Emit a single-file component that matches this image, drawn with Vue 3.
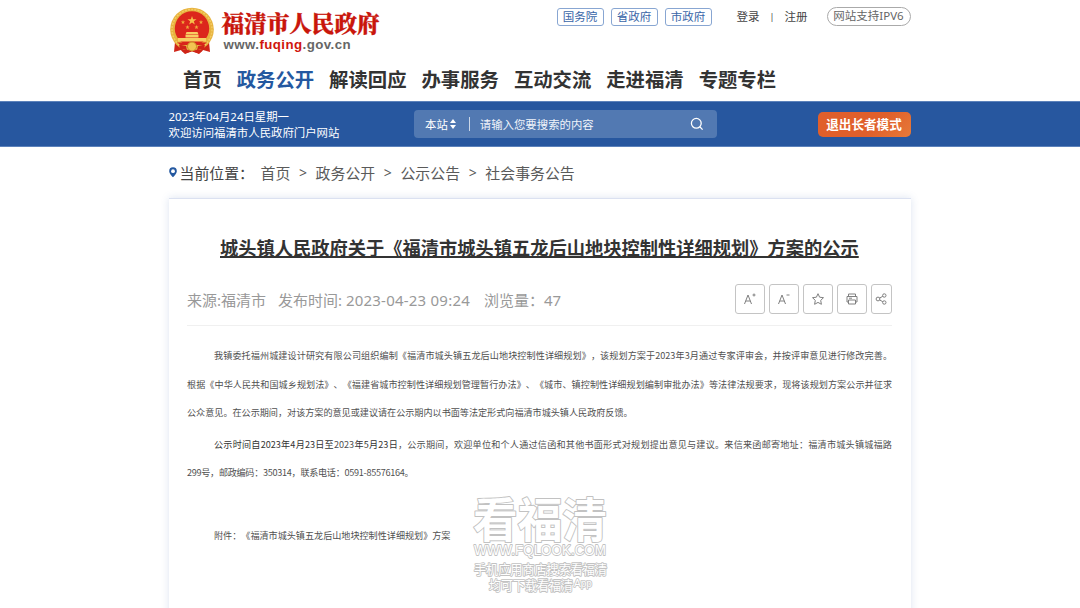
<script setup>
import { ref } from 'vue'

const keyword = ref('')
const activeNav = ref('政务公开')
const portals = ['国务院', '省政府', '市政府']
const navItems = ['首页', '政务公开', '解读回应', '办事服务', '互动交流', '走进福清', '专题专栏']
const crumbs = ['首页', '政务公开', '公示公告', '社会事务公告']
</script>

<template>
  <div class="page">
    <header class="header">
      <div class="container top">
        <div class="logo">
          <svg class="emblem" viewBox="0 0 46 48">
            <path d="M6 35L5 45L12 43L16 47L23 44L30 47L34 43L41 45L40 35Z" fill="#cf2518" />
            <circle cx="23" cy="22.5" r="21.8" fill="#e7b33e" />
            <circle cx="23" cy="22.5" r="20" fill="none" stroke="#f3ca62" stroke-width="1.6" stroke-dasharray="2 1.2" />
            <circle cx="23" cy="21.5" r="17.2" fill="#dc261c" />
            <path d="M23 9l1.100 3.200h3.400l-2.700 2 1 3.300-2.800-2-2.800 2 1-3.300-2.700-2h3.400z" fill="#f7c04b" />
            <path d="M14 13l.6 1.400 1.500.1-1.200 1 .4 1.500-1.300-.8-1.300.8.4-1.500-1.200-1 1.500-.1zM32 13l.6 1.400 1.500.1-1.200 1 .4 1.500-1.300-.8-1.300.8.4-1.500-1.200-1 1.500-.1zM18.500 18l.6 1.400 1.500.1-1.200 1 .4 1.500-1.300-.8-1.300.8.4-1.500-1.200-1 1.500-.1zM27.500 18l.6 1.400 1.500.1-1.200 1 .4 1.500-1.300-.8-1.300.8.4-1.500-1.200-1 1.500-.1z" fill="#f0a83c" />
            <path d="M17.500 25h11l1 2.500h-13zM16.500 28h13v2.500h-13zM9 31h28v3.500H9z" fill="#f7cf62" />
            <path d="M8 35.500h30l-3.500 2.500H11.500z" fill="#d8251b" />
            <path d="M10 37.500l7 1.500 1 4-7-1zM36 37.500l-7 1.500-1 4 7-1z" fill="#cf2518" />
            <circle cx="23" cy="39.500" r="4.500" fill="#f2c552" stroke="#c98d22" />
            <path d="M12 43.500l6-1 5 2 5-2 6 1-4 3-7-2-7 2z" fill="#cf2518" />
          </svg>
          <div class="logo-text">
            <div class="site-name">福清市人民政府</div>
            <div class="site-url">www.<span>fuqing</span>.gov.cn</div>
          </div>
        </div>
        <div class="links">
          <a v-for="item of portals" :key="item" class="portal">{{ item }}</a>
          <a class="login">登录</a>
          <span class="bar">|</span>
          <a class="register">注册</a>
          <a class="ipv6">网站支持IPV6</a>
        </div>
      </div>
      <nav class="container nav">
        <a
          v-for="item of navItems"
          :key="item"
          :class="item === activeNav ? 'active' : ''"
          @click="activeNav = item"
          >{{ item }}</a
        >
      </nav>
    </header>

    <div class="blue-bar">
      <div class="container blue-inner">
        <div class="welcome">
          <div>2023年04月24日星期一</div>
          <div>欢迎访问福清市人民政府门户网站</div>
        </div>
        <div class="search">
          <span>本站</span>
          <svg class="sort" viewBox="0 0 6 10">
            <path d="M3 0L6 4H0zM0 6h6L3 10z" fill="#fff" />
          </svg>
          <i class="divider"></i>
          <input v-model="keyword" placeholder="请输入您要搜索的内容" />
          <svg class="magnifier" viewBox="0 0 14 14">
            <circle cx="6.300" cy="6.300" r="4.900" />
            <path d="M9.800 9.800L12.600 12.600" />
          </svg>
        </div>
        <button class="elder">退出长者模式</button>
      </div>
    </div>

    <div class="container crumbs">
      <svg class="pin" viewBox="0 0 8 11">
        <path d="M4 .3a3.800 3.800 0 0 1 3.800 3.900C7.800 6.800 4 10.200 4 10.200S.2 6.800.2 4.200A3.800 3.800 0 0 1 4 .3z" fill="#2458a0" />
        <circle cx="4" cy="4.200" r="1.900" fill="#fff" />
      </svg>
      <span class="crumb-label">当前位置：</span>
      <template v-for="(item, index) of crumbs" :key="item">
        <span v-if="index > 0" class="arrow">&gt;</span>
        <a>{{ item }}</a>
      </template>
    </div>

    <main class="container card">
      <h1>城头镇人民政府关于《福清市城头镇五龙后山地块控制性详细规划》方案的公示</h1>
      <div class="meta">
        <span class="source">来源:福清市</span>
        <span class="time">发布时间: <span class="date">2023-04-23 09:24</span></span>
        <span>浏览量：47</span>
        <div class="tools">
          <button>
            <svg viewBox="0 0 14 14"><path d="M1.500 12L5 3L8.500 12M2.700 9h4.600M9.500 3h3M11 1.500v3" /></svg>
          </button>
          <button>
            <svg viewBox="0 0 14 14"><path d="M1.500 12L5 3L8.500 12M2.700 9h4.600M9.500 3h3" /></svg>
          </button>
          <button>
            <svg viewBox="0 0 14 14">
              <path d="M7 1.700l1.600 3.500 3.900.5-2.800 2.700.7 3.900L7 10.400l-3.400 1.900.7-3.900L1.500 5.700l3.900-.5z" />
            </svg>
          </button>
          <button>
            <svg viewBox="0 0 14 14">
              <path d="M3.500 4.500V2h7v2.500M3.500 10H2V4.500h10V10h-1.500M3.500 8h7v4h-7zM4 6.200h3" />
            </svg>
          </button>
          <button class="share">
            <svg viewBox="0 0 14 14">
              <circle cx="4" cy="7" r="1.900" />
              <circle cx="10.300" cy="3.500" r="1.700" />
              <circle cx="10.300" cy="10.500" r="1.700" />
              <path d="M5.700 6l3.100-1.700M5.700 8l3.100 1.700" />
            </svg>
          </button>
        </div>
      </div>

      <article class="content">
        <p>
          <span class="line first">我镇委托福州城建设计研究有限公司组织编制《福清市城头镇五龙后山地块控制性详细规划》，该规划方案于2023年3月通过专家评审会，并按评审意见进行修改完善。</span>
          <span class="line">根据《中华人民共和国城乡规划法》、《福建省城市控制性详细规划管理暂行办法》、《城市、镇控制性详细规划编制审批办法》等法律法规要求，现将该规划方案公示并征求</span>
          <span class="line last">公众意见。在公示期间，对该方案的意见或建议请在公示期内以书面等法定形式向福清市城头镇人民政府反馈。</span>
        </p>
        <p>
          <span class="line first"><b>公示时间自2023年4月23日至</b>2023<b>年5月23日</b>，公示期间，欢迎单位和个人通过信函和其他书面形式对规划提出意见与建议。来信来函邮寄地址：福清市城头镇城福路</span>
          <span class="line last numbers">299号，邮政编码：350314，联系电话：0591-85576164。</span>
        </p>
        <p class="attachment">附件：《福清市城头镇五龙后山地块控制性详细规划》方案</p>
      </article>
    </main>

    <svg class="watermark" viewBox="0 0 140 104">
      <text class="wm-big" x="3" y="43" textLength="134" lengthAdjust="spacingAndGlyphs">看福清</text>
      <text class="wm-url" x="4" y="60.500" textLength="132" lengthAdjust="spacingAndGlyphs">WWW.FQLOOK.COM</text>
      <text class="wm-small" x="4" y="80" textLength="133" lengthAdjust="spacingAndGlyphs">手机应用商店搜索看福清</text>
      <text class="wm-small" x="19" y="96" textLength="84" lengthAdjust="spacingAndGlyphs">均可下载看福清</text>
      <text class="wm-app" x="104" y="93" textLength="18" lengthAdjust="spacingAndGlyphs">App</text>
    </svg>
  </div>
</template>

<style>
body {
  background: #fff;
  overflow: hidden;
}
</style>

<style scoped>
* {
  box-sizing: border-box;
}
.page {
  position: relative;
  height: 608px;
  overflow: hidden;
  font-family: 'Noto Sans', 'Noto Sans CJK SC', sans-serif;
  text-spacing-trim: space-all;
  white-space: nowrap;
  color: #333;
}
.container {
  width: 742px;
  margin-left: 168.5px;
}
.header {
  height: 101px;
}
.top {
  display: flex;
  justify-content: space-between;
  height: 60px;
}
.logo {
  display: flex;
  padding-top: 7px;
}
.emblem {
  width: 46px;
  height: 48px;
}
.logo-text {
  margin-left: 7px;
}
.site-name {
  margin-top: 2px;
  font-family: 'Noto Serif CJK SC', 'Noto Sans CJK SC', serif;
  font-size: 22.6px;
  line-height: 26px;
  font-weight: 900;
  color: #c9160c;
  -webkit-text-stroke: 0.3px #c9160c;
}
.site-url {
  margin-left: 2px;
  margin-top: 1px;
  font: bold 13.3px/17px 'Liberation Sans', sans-serif;
  letter-spacing: 0.42px;
  color: #666;
}
.site-url span {
  color: #d0160d;
}
.links {
  display: flex;
  align-items: center;
  height: 19px;
  margin-top: 7px;
  font-size: 11.5px;
  line-height: 16px;
  color: #444;
}
.portal {
  width: 47px;
  height: 18px;
  margin-right: 7px;
  border: 1px solid #88a6d2;
  border-radius: 3px;
  text-align: center;
  color: #3a66a8;
}
.login {
  margin-left: 18px;
}
.bar {
  width: 25px;
  text-align: center;
  font-size: 9px;
}
.ipv6 {
  width: 84px;
  height: 19px;
  margin-left: 19px;
  border: 1px solid #aaa;
  border-radius: 10px;
  text-align: center;
  color: #666;
}
.nav {
  display: flex;
  gap: 15px;
  padding-left: 14.5px;
  font-size: 19.35px;
  line-height: 40px;
  font-weight: bold;
}
.nav .active {
  color: #2458a0;
}
.blue-bar {
  height: 46px;
  background: #27579f;
  border-top: 1px solid #5c82bb;
  border-bottom: 1px solid #5c82bb;
}
.blue-inner {
  display: flex;
  align-items: center;
  height: 44px;
  color: #fff;
}
.welcome {
  width: 245.5px;
  padding-top: 1px;
  font-size: 11.4px;
  line-height: 16px;
}
.search {
  display: flex;
  align-items: center;
  width: 303px;
  height: 28px;
  padding-left: 11px;
  border-radius: 4px;
  background: #5279b2;
  font-size: 11.4px;
}
.sort {
  width: 6px;
  height: 10px;
  margin-left: 2px;
}
.divider {
  width: 1px;
  height: 14px;
  margin: 0 10px 0 13px;
  background: #cbd7e8;
}
.search input {
  width: 210px;
  padding: 0;
  border: 0;
  outline: 0;
  background: none;
  font: inherit;
  color: #fff;
}
.search input::placeholder {
  color: #f0f4fa;
}
.magnifier {
  width: 14px;
  height: 14px;
  fill: none;
  stroke: #fff;
  stroke-width: 1.3;
}
.elder {
  width: 93px;
  height: 25px;
  margin-left: auto;
  padding: 0 0 1px;
  border: 0;
  border-radius: 5px;
  background: linear-gradient(135deg, #e05f2b 60%, #e67a38);
  font: bold 12.6px/24px 'Noto Sans CJK SC', sans-serif;
  color: #fff;
}
.crumbs {
  display: flex;
  align-items: center;
  height: 51px;
  font-size: 14.9px;
  color: #5a5a5a;
}
.pin {
  width: 8px;
  height: 11px;
  margin-right: 3px;
}
.crumb-label {
  width: 81px;
  color: #444;
}
.arrow {
  width: 25.3px;
  text-align: center;
  font-size: 14px;
}
.card {
  height: 420px;
  padding: 0 19px 0 18.5px;
  border-top: 1px solid #dbe1f1;
  box-shadow: 0 0 8px rgba(60, 100, 170, 0.18);
}
h1 {
  margin: 34px 0 0 33px;
  font-size: 18.26px;
  line-height: 30px;
  font-weight: bold;
  text-decoration: underline;
  text-decoration-thickness: 1.5px;
  text-underline-offset: 1px;
}
.meta {
  display: flex;
  align-items: center;
  height: 51px;
  margin: 12px 0 15px;
  padding-bottom: 1px;
  border-bottom: 1px solid #f0f0f0;
  font-size: 15px;
  color: #999;
}
.source {
  width: 91px;
}
.time {
  width: 206px;
}
.date {
  letter-spacing: 0.22px;
}
.tools {
  display: flex;
  gap: 4px;
  margin-left: auto;
  margin-top: -2px;
}
.tools button {
  display: flex;
  align-items: center;
  justify-content: center;
  width: 30px;
  height: 30px;
  padding: 0;
  border: 1px solid #c4c4c4;
  border-radius: 3px;
  background: #fff;
}
.tools .share {
  width: 21px;
}
.tools svg {
  width: 14px;
  height: 14px;
  flex: none;
  fill: none;
  stroke: #808080;
  stroke-width: 1;
}
.content {
  font-family: 'Noto Sans CJK SC', sans-serif;
  font-size: 9.1px;
  color: #505050;
}
p {
  margin: 0 0 3px;
}
.line {
  display: block;
  width: 705px;
  line-height: 28.5px;
  text-align: justify;
  text-align-last: justify;
}
.first {
  padding-left: 27px;
}
.last {
  text-align-last: left;
}
.numbers {
  letter-spacing: -0.28px;
}
.line b {
  font-weight: normal;
  color: #333;
}
.attachment {
  margin: 34px 0 0 27px;
  line-height: 28px;
}
/* floats over the bottom of the article */
.watermark {
  position: absolute;
  left: 470px;
  top: 494px;
  width: 140px;
  height: 104px;
  overflow: visible;
  font-family: 'Noto Sans CJK SC', sans-serif;
  fill: #fff;
  stroke: #c2c2c2;
  stroke-linejoin: round;
  paint-order: stroke;
}
.wm-big {
  font-size: 47px;
  font-weight: 700;
  stroke-width: 2px;
}
.wm-url {
  font-family: 'Liberation Sans', sans-serif;
  font-size: 15px;
  font-weight: 400;
  stroke-width: 1.8px;
}
.wm-small {
  font-size: 13px;
  font-weight: 400;
  stroke-width: 1.8px;
}
.wm-app {
  font-family: 'Liberation Sans', sans-serif;
  font-size: 10px;
  stroke-width: 1.6px;
}
</style>
